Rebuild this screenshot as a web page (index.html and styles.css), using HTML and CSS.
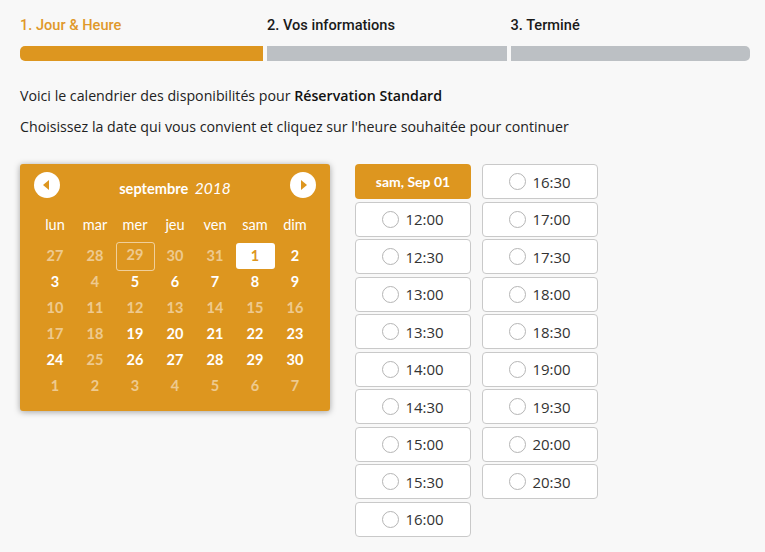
FILE: index.html
```html
<!DOCTYPE html>
<html lang="fr">
<head>
  <meta charset="utf-8">
  <title>Réservation</title>
  <meta name="viewport" content="width=device-width, initial-scale=1.0">
  <link rel="stylesheet" href="styles.css">
</head>
<body>
  <div class="steps">
    <div class="step active">
      <div class="step-label">1. Jour &amp; Heure</div>
      <div class="step-bar"></div>
    </div>
    <div class="step">
      <div class="step-label">2. Vos informations</div>
      <div class="step-bar"></div>
    </div>
    <div class="step">
      <div class="step-label">3. Terminé</div>
      <div class="step-bar"></div>
    </div>
  </div>

  <p class="intro">Voici le calendrier des disponibilités pour <strong>Réservation Standard</strong></p>
  <p class="intro">Choisissez la date qui vous convient et cliquez sur l'heure souhaitée pour continuer</p>

  <div class="booking">
    <div class="calendar">
      <div class="cal-head">
        <button class="cal-nav prev"><span class="tri"></span></button>
        <div class="cal-title">septembre <em>2018</em></div>
        <button class="cal-nav next"><span class="tri"></span></button>
      </div>
      <div class="cal-grid">
        <div class="dow">lun</div><div class="dow">mar</div><div class="dow">mer</div><div class="dow">jeu</div><div class="dow">ven</div><div class="dow">sam</div><div class="dow">dim</div>

        <div class="day off">27</div><div class="day off">28</div><div class="day off today">29</div><div class="day off">30</div><div class="day off">31</div><div class="day selected">1</div><div class="day">2</div>
        <div class="day">3</div><div class="day off">4</div><div class="day">5</div><div class="day">6</div><div class="day">7</div><div class="day">8</div><div class="day">9</div>
        <div class="day off">10</div><div class="day off">11</div><div class="day off">12</div><div class="day off">13</div><div class="day off">14</div><div class="day off">15</div><div class="day off">16</div>
        <div class="day off">17</div><div class="day off">18</div><div class="day">19</div><div class="day">20</div><div class="day">21</div><div class="day">22</div><div class="day">23</div>
        <div class="day">24</div><div class="day off">25</div><div class="day">26</div><div class="day">27</div><div class="day">28</div><div class="day">29</div><div class="day">30</div>
        <div class="day off">1</div><div class="day off">2</div><div class="day off">3</div><div class="day off">4</div><div class="day off">5</div><div class="day off">6</div><div class="day off">7</div>
      </div>
    </div>

    <div class="slots">
      <div class="slot-head">sam, Sep 01</div>
      <label class="slot"><span class="radio"></span>12:00</label>
      <label class="slot"><span class="radio"></span>12:30</label>
      <label class="slot"><span class="radio"></span>13:00</label>
      <label class="slot"><span class="radio"></span>13:30</label>
      <label class="slot"><span class="radio"></span>14:00</label>
      <label class="slot"><span class="radio"></span>14:30</label>
      <label class="slot"><span class="radio"></span>15:00</label>
      <label class="slot"><span class="radio"></span>15:30</label>
      <label class="slot"><span class="radio"></span>16:00</label>
      <label class="slot"><span class="radio"></span>16:30</label>
      <label class="slot"><span class="radio"></span>17:00</label>
      <label class="slot"><span class="radio"></span>17:30</label>
      <label class="slot"><span class="radio"></span>18:00</label>
      <label class="slot"><span class="radio"></span>18:30</label>
      <label class="slot"><span class="radio"></span>19:00</label>
      <label class="slot"><span class="radio"></span>19:30</label>
      <label class="slot"><span class="radio"></span>20:00</label>
      <label class="slot"><span class="radio"></span>20:30</label>
    </div>
  </div>
</body>
</html>
```

FILE: styles.css
```css
body {
  margin: 0;
  padding: 15px 15px 0 20px;
  background: #f8f8f8;
  color: #222;
  font-family: "Open Sans", sans-serif;
  font-size: 14.2px;
}

.steps {
  display: flex;
  gap: 4px;
}

.step {
  flex: 1;
}

.step:first-child {
  flex: 0 0 243px;
}

.step-label {
  font-family: Roboto, sans-serif;
  font-weight: 500;
  font-size: 14.6px;
  line-height: 20px;
  color: #1a1a1a;
  margin-bottom: 11px;
}

.step.active .step-label {
  color: #e0982a;
}

.step-bar {
  height: 15px;
  background: #bcc0c4;
}

.step.active .step-bar {
  background: #dd961f;
}

.step:first-child .step-bar {
  border-radius: 5px 0 0 5px;
}

.step:last-child .step-bar {
  border-radius: 0 5px 5px 0;
}

.intro {
  margin: 0;
  line-height: 20px;
  margin-top: 25px;
}

.intro + .intro {
  margin-top: 11px;
}

.intro strong {
  font-weight: 600;
  color: #111;
}

.booking {
  display: flex;
  align-items: flex-start;
  gap: 26px;
  margin-top: 27px;
}

/* calendar */

.calendar {
  width: 280px;
  padding: 8px 15px 12px;
  background: #dd961f;
  border-radius: 3px;
  box-shadow: 0 1px 6px rgba(0, 0, 0, 0.35);
  color: #fff;
  font-family: Lato, sans-serif;
}

.cal-head {
  display: flex;
  align-items: center;
  justify-content: space-between;
  height: 26px;
  margin: 0 0 14px;
}

.cal-nav {
  width: 26px;
  height: 26px;
  border: none;
  border-radius: 50%;
  background: #fff;
  padding: 0;
  display: flex;
  align-items: center;
  justify-content: center;
  margin: 0 -1px;
}

.tri {
  width: 0;
  height: 0;
  border-top: 5px solid transparent;
  border-bottom: 5px solid transparent;
}

.prev .tri {
  border-right: 6px solid #dd961f;
  margin-right: 2px;
}

.next .tri {
  border-left: 6px solid #dd961f;
  margin-left: 2px;
}

.cal-title {
  font-weight: 700;
  font-size: 14.6px;
  margin-top: 6px;
}

.cal-title em {
  font-weight: 400;
  font-size: 15.5px;
  margin-left: 3px;
}

.cal-grid {
  display: grid;
  grid-template-columns: repeat(7, 40px);
  grid-template-rows: 31px;
  grid-auto-rows: 26px;
  text-align: center;
}

.dow {
  line-height: 26px;
  font-size: 14.5px;
}

.day {
  line-height: 26px;
  font-weight: 700;
  font-size: 14.5px;
  border-radius: 3px;
  margin: 0 0.5px;
}

.day.off {
  color: rgba(255, 255, 255, 0.5);
}

.day.today {
  border: 1px solid rgba(255, 255, 255, 0.55);
  line-height: 24px;
  margin-top: -1px;
  height: 27px;
}

.day.selected {
  background: #fff;
  color: #dd961f;
}

/* time slots */

.slots {
  display: grid;
  grid-template-columns: repeat(2, 116px);
  grid-template-rows: repeat(10, 35px);
  grid-auto-flow: column;
  column-gap: 11px;
  row-gap: 2.5px;
  margin-left: -1px;
}

.slot-head,
.slot {
  display: flex;
  align-items: center;
  justify-content: center;
  border-radius: 4px;
}

.slot-head {
  background: #dd961f;
  color: #fff;
  font-family: Lato, sans-serif;
  font-weight: 700;
  font-size: 14px;
}

.slot {
  box-sizing: border-box;
  background: #fff;
  border: 1px solid #c9c9c9;
  font-size: 15px;
  color: #333;
  gap: 6px;
}

.radio {
  width: 15px;
  height: 15px;
  border: 1px solid #b5b5b5;
  border-radius: 50%;
  background: #fff;
}
```
